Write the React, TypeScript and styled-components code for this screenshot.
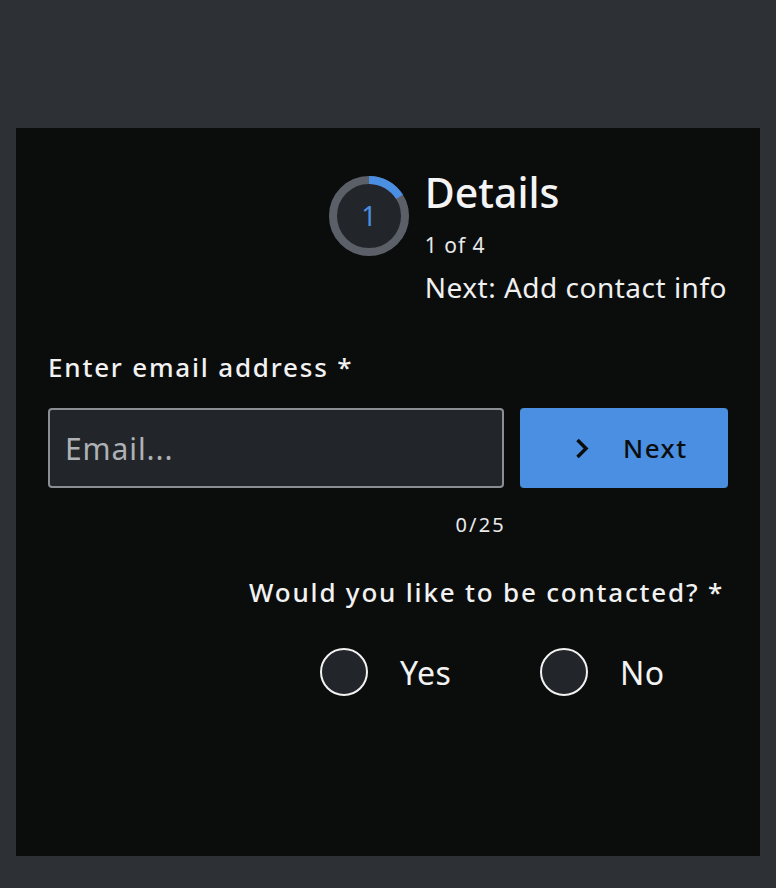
import React from "react";
import styled, { createGlobalStyle } from "styled-components";

const Global = createGlobalStyle`
  html, body { margin: 0; padding: 0; background: #2d3035; }
  body { font-family: "Noto Sans", "Open Sans", sans-serif; color: #f2f2f2; }
  * { box-sizing: border-box; }
`;

const Page = styled.div`
  padding: 128px 16px 32px 16px;
  min-height: 888px;
`;

const Card = styled.div`
  background: #0b0d0d;
  height: 728px;
  padding: 34px 32px 32px 32px;
  display: flex;
  flex-direction: column;
`;

const Header = styled.div`
  display: flex;
  align-items: flex-start;
  justify-content: flex-end;
  gap: 16px;
  padding-right: 1px;
`;

const Ring = styled.svg`
  margin-top: 14px;
  flex: none;
`;

const StepInfo = styled.div`
  display: flex;
  flex-direction: column;
`;

const Title = styled.div`
  font-size: 41px;
  line-height: 56px;
  margin-top: 2px;
  font-weight: 500;
  color: #f4f4f4;
`;

const Count = styled.div`
  font-size: 21px;
  line-height: 28px;
  letter-spacing: 1px;
  margin-top: 11px;
  color: #e8e8e8;
`;

const NextStep = styled.div`
  font-size: 28px;
  line-height: 36px;
  letter-spacing: 0.5px;
  margin-top: 10px;
  color: #f0f0f0;
`;

const Label = styled.div`
  margin-top: 44px;
  font-size: 26px;
  line-height: 36px;
  letter-spacing: 1.8px;
  font-weight: 500;
  color: #f2f2f2;
`;

const Row = styled.div`
  display: flex;
  gap: 16px;
  margin-top: 23px;
`;

const Field = styled.div`
  width: 456px;
  display: flex;
  flex-direction: column;
  align-items: flex-end;
`;

const Input = styled.input`
  width: 456px;
  height: 80px;
  background: #222529;
  border: 2px solid #8b8e92;
  border-radius: 4px;
  padding: 0 15px;
  font-family: "Noto Sans", "Open Sans", sans-serif;
  font-size: 30px;
  letter-spacing: 0.9px;
  color: #f2f2f2;
  outline: none;
  &::placeholder { color: #aeb1b5; }
`;

const Counter = styled.div`
  margin-top: 23px;
  margin-right: -2px;
  font-size: 20px;
  line-height: 28px;
  letter-spacing: 2.2px;
  color: #eaeaea;
`;

const Button = styled.button`
  width: 208px;
  height: 80px;
  flex: none;
  background: #4a8fe2;
  border: none;
  border-radius: 4px;
  display: flex;
  align-items: center;
  justify-content: flex-start;
  gap: 34px;
  padding: 0 0 0 55px;
  font-family: "Noto Sans", "Open Sans", sans-serif;
  font-size: 26px;
  font-weight: 500;
  letter-spacing: 1.5px;
  color: #0b0d0d;
`;

const Question = styled.div`
  margin-top: 35px;
  align-self: flex-end;
  padding-right: 4px;
  font-size: 26px;
  line-height: 36px;
  letter-spacing: 1.8px;
  font-weight: 500;
  color: #f2f2f2;
`;

const Options = styled.div`
  display: flex;
  margin-top: 38px;
  margin-left: 272px;
`;

const Option = styled.label`
  flex: none;
  width: 220px;
  display: flex;
  align-items: center;
  gap: 32px;
  font-size: 32px;
  letter-spacing: 0.5px;
  color: #f2f2f2;
`;

const Radio = styled.span`
  width: 48px;
  height: 48px;
  flex: none;
  border-radius: 50%;
  border: 2px solid #f2f2f2;
  background: #222529;
  display: inline-block;
`;

function Progress() {
  const r = 36;
  const c = 2 * Math.PI * r;
  const frac = 58 / 360;
  return (
    <Ring width="80" height="80" viewBox="0 0 80 80">
      <circle cx="40" cy="40" r="40" fill="#222529" />
      <circle cx="40" cy="40" r={r} fill="none" stroke="#5b5f67" strokeWidth="8" />
      <circle
        cx="40"
        cy="40"
        r={r}
        fill="none"
        stroke="#4a8fe2"
        strokeWidth="8"
        strokeDasharray={`${c * frac} ${c}`}
        transform="rotate(-90 40 40)"
      />
      <text x="40" y="50" textAnchor="middle" fontSize="27" fill="#4a8fe2" fontFamily="Noto Sans, sans-serif">
        1
      </text>
    </Ring>
  );
}

export default function App() {
  return (
    <>
      <Global />
      <Page>
        <Card>
          <Header>
            <Progress />
            <StepInfo>
              <Title>Details</Title>
              <Count>1 of 4</Count>
              <NextStep>Next: Add contact info</NextStep>
            </StepInfo>
          </Header>
          <Label>Enter email address *</Label>
          <Row>
            <Field>
              <Input placeholder="Email..." />
              <Counter>0/25</Counter>
            </Field>
            <Button>
              <svg width="14" height="21" viewBox="0 0 14 21">
                <path d="M2.5 2 L11 10.5 L2.5 19" fill="none" stroke="#0b0d0d" strokeWidth="3.5" />
              </svg>
              Next
            </Button>
          </Row>
          <Question>Would you like to be contacted? *</Question>
          <Options>
            <Option>
              <Radio />
              Yes
            </Option>
            <Option>
              <Radio />
              No
            </Option>
          </Options>
        </Card>
      </Page>
    </>
  );
}
